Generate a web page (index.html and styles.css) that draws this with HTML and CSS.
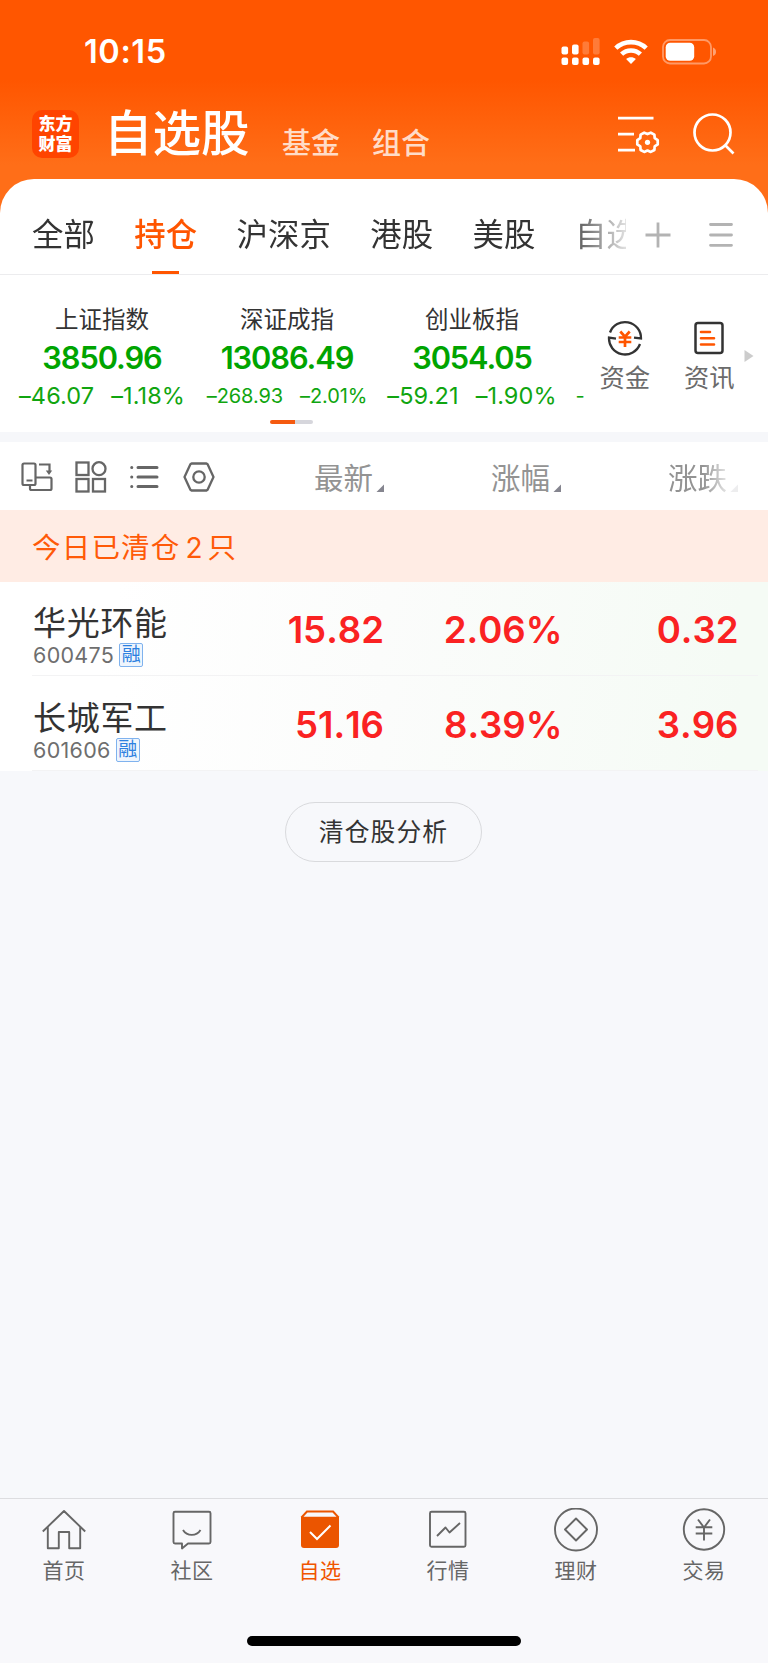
FILE: index.html
```html
<!DOCTYPE html>
<html lang="zh-CN">
<head>
<meta charset="utf-8">
<title>自选股</title>
<link rel="stylesheet" href="styles.css">
</head>
<body>
<div class="app">
  <header class="top">
    <div class="status">
      <span class="clock">10:15</span>
      <svg class="signal" width="40" height="28" viewBox="0 0 40 28" fill="#fff">
        <rect x=".5" y="8.5" width="6.6" height="8" rx="2"/><rect x="11" y="6.5" width="6.6" height="10" rx="2"/>
        <g opacity=".22"><rect x="21.5" y="3.5" width="6.6" height="13" rx="2"/><rect x="32" y="0" width="6.6" height="16.500" rx="2"/></g>
        <rect x=".5" y="19.500" width="6.6" height="7.500" rx="2"/><rect x="11" y="19.500" width="6.6" height="7.500" rx="2"/><rect x="21.500" y="19.500" width="6.6" height="7.500" rx="2"/><rect x="32" y="19.500" width="6.6" height="7.500" rx="2"/>
      </svg>
      <svg class="wifi" width="34" height="26" viewBox="0 0 34 26">
        <g fill="none" stroke="#fff" stroke-width="4.600"><path d="M1.800 9.200a22 22 0 0 1 30.400 0"/><path d="M7.600 15.200a13.600 13.600 0 0 1 18.800 0"/></g>
        <path d="M17 25l-4.900-5c2.900-2.500 6.900-2.500 9.800 0z" fill="#fff"/>
      </svg>
      <svg class="battery" width="55" height="26" viewBox="0 0 55 26">
        <rect x="1" y="1" width="48" height="23.500" rx="7" fill="none" stroke="#fff" stroke-opacity=".4" stroke-width="1.800"/>
        <rect x="3.700" y="3.800" width="28.500" height="18" rx="4.500" fill="#fff"/>
        <path d="M51 8.500q3 1.200 3 4.300t-3 4.300z" fill="#fff" opacity=".45"/>
      </svg>
    </div>
    <div class="nav">
      <div class="logo"><span>东方</span><span>财富</span></div>
      <h1 class="title">自选股</h1>
      <span class="sub">基金</span>
      <span class="sub">组合</span>
      <svg class="tune" width="44" height="42" viewBox="0 0 44 42" fill="none" stroke="#fff" stroke-width="2.700">
        <path d="M1 5.200h35.500M1 21.200h16M1 37.200h17"/>
        <g transform="translate(30.500 29.300)"><path stroke-linejoin="round" d="M10.200-2.100V2.100L7.200 4.100 6.900 7.700 3.300 9.600 0 8.200-3.300 9.600-6.900 7.700-7.200 4.100-10.200 2.100V-2.100L-7.200-4.100-6.900-7.700-3.300-9.600 0-8.200 3.300-9.600 6.900-7.700 7.200-4.100z"/><circle r="2.600" fill="#fff" stroke="none"/></g>
      </svg>
      <svg class="search" width="42" height="42" viewBox="0 0 42 42" fill="none" stroke="#fff" stroke-width="2.700"><circle cx="19.500" cy="19.500" r="18"/><path d="M32 32l8.500 8.500"/></svg>
    </div>
  </header>

  <main class="sheet">
    <nav class="tabs">
      <div class="tablist">
        <span>全部</span><span class="on">持仓</span><span>沪深京</span><span>港股</span><span>美股</span><span>自选</span>
      </div>
      <svg class="plus" width="26" height="26" viewBox="0 0 26 26" stroke="#b3b3b3" stroke-width="2.800"><path d="M13 .5v25M.5 13h25"/></svg>
      <svg class="menu" width="24" height="26" viewBox="0 0 24 26" stroke="#b3b3b3" stroke-width="2.800" stroke-linecap="round"><path d="M1.500 2.500h21M1.500 13h21M1.500 23.300h21"/></svg>
    </nav>

    <section class="market">
      <div class="indices">
        <div class="index"><span class="name">上证指数</span><b class="value">3850.96</b><span class="chg"><i>–46.07</i><i>–1.18%</i></span></div>
        <div class="index"><span class="name">深证成指</span><b class="value">13086.49</b><span class="chg small"><i>–268.93</i><i>–2.01%</i></span></div>
        <div class="index"><span class="name">创业板指</span><b class="value">3054.05</b><span class="chg"><i>–59.21</i><i>–1.90%</i></span></div>
        <div class="peek">-</div>
      </div>
      <div class="shortcut fund">
        <svg width="36" height="36" viewBox="0 0 36 36" fill="none">
          <g stroke="#333" stroke-width="2.300"><path d="M3 12.500A16 16 0 0 1 34 18.500L27 17.600"/><path d="M33 24A16 16 0 0 1 2 17.600L9 18.700"/></g>
          <path d="M13.300 11.500l4.700 5.200 4.700-5.200M11.700 17.500h12.600M11.700 22h12.600M18 17v10" stroke="#ff5500" stroke-width="2.700"/>
        </svg>
        <span>资金</span>
      </div>
      <div class="shortcut">
        <svg width="36" height="36" viewBox="0 0 36 36" fill="none"><rect x="4.500" y="3" width="27" height="30" rx="2.500" stroke="#333" stroke-width="2.500"/><path d="M10 12h9M10 18.200h13M10 24.500h13" stroke="#ff5500" stroke-width="2.600" stroke-linecap="round"/></svg>
        <span>资讯</span>
      </div>
      <svg class="more" width="10" height="14" viewBox="0 0 10 14"><path d="M.5 1v12L9.500 7z" fill="#ccc"/></svg>
      <div class="slider"></div>
    </section>

    <div class="colhead">
      <svg class="ic" width="32" height="32" viewBox="0 0 32 32" fill="none" stroke="#666" stroke-width="2.200"><rect x="1.500" y="2.500" width="13" height="21.500" rx="1.500"/><path d="M5.500 19.500h6M9 24v3.500q0 1.500 1.500 1.500h18.500q1.500 0 1.500-1.500V18q0-1.500-1.500-1.500H15M18 3.500h10.500v7"/><path d="M24.800 9.500h6.400L28 14z" fill="#666" stroke="none"/></svg>
      <svg class="ic" width="32" height="32" viewBox="0 0 32 32" fill="none" stroke="#666" stroke-width="2.300"><rect x="1.500" y="1.500" width="12" height="12.500"/><circle cx="24" cy="7.700" r="6.500"/><rect x="1.500" y="18" width="12" height="12.500"/><rect x="18" y="18" width="12" height="12.500"/></svg>
      <svg class="ic" width="32" height="32" viewBox="0 0 32 32" fill="none" stroke="#666" stroke-width="3" stroke-linecap="round"><path d="M9 6.500h19M9 16h19M9 25.500h19M2.700 6.500h.1M2.700 16h.1M2.700 25.500h.1"/></svg>
      <svg class="ic" width="32" height="32" viewBox="0 0 32 32" fill="none" stroke="#666" stroke-width="2.300" stroke-linejoin="round"><path d="M8.600 2.500h14.800l1.200.8L30.500 16l-5.900 12.700-1.200.8H8.600l-1.200-.8L1.500 16 7.400 3.300z"/><circle cx="16" cy="16" r="5.700"/></svg>
      <span class="col c1">最新<svg width="8" height="8" viewBox="0 0 8 8"><path d="M8 .5V8H.5z" fill="#85858f"/></svg></span>
      <span class="col c2">涨幅<svg width="8" height="8" viewBox="0 0 8 8"><path d="M8 .5V8H.5z" fill="#85858f"/></svg></span>
      <span class="col c3">涨跌<svg width="8" height="8" viewBox="0 0 8 8"><path d="M8 .5V8H.5z" fill="#85858f"/></svg></span>
    </div>

    <div class="banner">今日已清仓<span>2</span>只</div>

    <div class="stock">
      <div class="who"><span class="sname">华光环能</span><span class="code">600475<em>融</em></span></div>
      <b class="v1">15.82</b><b class="v2">2.06%</b><b class="v3">0.32</b>
    </div>
    <div class="stock">
      <div class="who"><span class="sname">长城军工</span><span class="code">601606<em>融</em></span></div>
      <b class="v1">51.16</b><b class="v2">8.39%</b><b class="v3">3.96</b>
    </div>
    <div class="rest"><button class="analyse">清仓股分析</button></div>
  </main>

  <footer class="bar">
    <div class="items">
      <div class="item"><svg width="44" height="44" viewBox="0 0 44 44" fill="none" stroke="#666" stroke-width="1.900"><path d="M.8 23.500L22 3l21.200 20.500M5.800 19v21.200h11V24h10.400v16.200h11V19" stroke-linejoin="round"/></svg><span>首页</span></div>
      <div class="item"><svg width="44" height="44" viewBox="0 0 44 44" fill="none" stroke="#666" stroke-width="1.900" stroke-linejoin="round"><path d="M5 3.800h34q1.500 0 1.500 1.500V34q0 1.500-1.500 1.500H18l-6 5v-5H5q-1.500 0-1.500-1.500V5.300Q3.500 3.800 5 3.800z"/><path d="M13 22c4 6.500 13.500 6.500 17.500 0"/></svg><span>社区</span></div>
      <div class="item on"><svg width="44" height="44" viewBox="0 0 44 44"><path d="M8.500 2.600h27L41 8.500V37q0 3-3 3H6q-3 0-3-3V8.500z" fill="#eb5500"/><path d="M9.500 4.500h25l4 4.300h-33z" fill="#f8f8fb"/><path d="M12 24l7 7L32.500 17.500" fill="none" stroke="#fff" stroke-width="2"/></svg><span>自选</span></div>
      <div class="item"><svg width="44" height="44" viewBox="0 0 44 44" fill="none" stroke="#666" stroke-width="1.900" stroke-linejoin="round"><rect x="4" y="3.800" width="35.500" height="35" rx="1.500"/><path d="M11 28l8.500-8.500 4 5L34 15"/></svg><span>行情</span></div>
      <div class="item"><svg width="44" height="44" viewBox="0 0 44 44" fill="none" stroke="#666" stroke-width="1.900" stroke-linejoin="round"><circle cx="22" cy="21.500" r="21"/><path d="M22 10.500l11 11-11 11-11-11z"/></svg><span>理财</span></div>
      <div class="item"><svg width="44" height="44" viewBox="0 0 44 44" fill="none" stroke="#666" stroke-width="1.900"><circle cx="22" cy="21.500" r="20.200"/><path d="M16 11.500l6 8 6-8M13.700 19.300h16.600M13.700 25.500h16.600M22 19.500V32.500"/></svg><span>交易</span></div>
    </div>
    <div class="home"></div>
  </footer>
</div>
</body>
</html>
```

FILE: styles.css
```css
* { box-sizing: border-box; }
body {
  margin: 0;
  font-family: Inter, "Noto Sans CJK SC", sans-serif;
  color: #333;
  background: #f7f8fb;
}
svg { display: block; flex: none; }
i, em { font-style: normal; }
span, b, i, h1 { white-space: nowrap; }

.app { width: 768px; height: 1663px; display: flex; flex-direction: column; overflow: hidden; background: linear-gradient(#ff5600 80px, #ff6e18 165px); }

/* Status bar and page header */
.top { height: 179px; flex: none; color: #fff; }
.status { height: 103px; display: flex; align-items: center; padding-left: 84px; }
.clock { font-size: 32.500px; font-weight: 600; line-height: 40px; width: 477px; letter-spacing: .600px; }
.wifi { margin-left: 13px; }
.battery { margin-left: 14px; }
.nav { display: flex; align-items: flex-start; padding-left: 32px; }
.logo { width: 47px; height: 48px; flex: none; margin-top: 7px; border-radius: 10px; background: #ff4400; display: flex; flex-direction: column; align-items: center; padding-top: 4px; font-weight: 900; font-size: 17px; line-height: 20px; }
.title { margin: 1px 0 0 25px; width: 178px; flex: none; font-size: 48.500px; font-weight: 500; line-height: 60px; }
.sub { margin-top: 21px; width: 90px; flex: none; font-size: 29px; font-weight: 500; line-height: 40px; color: #ffdcc8; }
.tune { margin: 10px 0 0 155px; }
.search { margin: 10px 0 0 32px; }

/* Sheet */
.sheet { flex: 1; min-height: 0; border-radius: 34px 34px 0 0; background: #fff; display: flex; flex-direction: column; overflow: hidden; }
.tabs { height: 96px; flex: none; display: flex; align-items: center; padding: 0 0 0 32px; border-bottom: 1px solid #ececee; }
.tablist { width: 594px; height: 95px; display: flex; gap: 39.500px; overflow: hidden; font-size: 31.400px; line-height: 113px; -webkit-mask-image: linear-gradient(90deg, #000 530px, rgba(0,0,0,.15) 594px); mask-image: linear-gradient(90deg, #000 530px, rgba(0,0,0,.15) 594px); }
.tablist .on { color: #ff5500; font-weight: 500; background: linear-gradient(#ff5500, #ff5500) 18px 92px / 27px 4px no-repeat; }
.plus { margin: 17px 0 0 18.500px; }
.menu { margin: 17px 0 0 38px; }

.market { height: 157px; flex: none; display: flex; position: relative; padding-left: 9.500px; }
.indices { width: 574px; flex: none; display: flex; overflow: hidden; }
.index { width: 185px; flex: none; display: flex; flex-direction: column; align-items: center; padding-top: 30px; }
.name { font-size: 23.500px; line-height: 30px; }
.value { font-size: 30.800px; font-weight: 600; line-height: 38px; margin-top: 4px; color: #00a400; letter-spacing: -1.100px; }
.chg { display: flex; gap: 17px; font-size: 23.500px; line-height: 30px; margin-top: 4px; color: #10a510; letter-spacing: .100px; }
.chg.small { font-size: 20px; letter-spacing: -.100px; }
.peek { padding: 106px 0 0 11px; font-size: 20px; line-height: 30px; color: #10a510; }
.shortcut { width: 84.500px; flex: none; display: flex; flex-direction: column; align-items: center; padding-top: 45px; font-size: 25.300px; line-height: 30px; color: #6b6b6b; }
.fund { margin-left: -1px; }
.shortcut span { margin-top: 7px; }
.more { margin: 74px 0 0 -8px; }
.slider { position: absolute; left: 270px; top: 145px; width: 43px; height: 4px; border-radius: 2px; background: linear-gradient(90deg, #f55a10 25px, #d6d6dc 25px); }

.colhead { height: 78px; flex: none; border-top: 10px solid #f6f7fa; display: flex; align-items: center; padding-left: 21px; }
.ic { margin: 1px 22px 0 0; }
.col { display: flex; align-items: flex-end; gap: 3px; margin-top: 3px; font-size: 29.500px; line-height: 38px; color: #939393; }
.col svg { margin-bottom: 5px; }
.c1 { margin-left: 77px; }
.c2 { margin-left: 107px; }
.c3 { margin-left: 107px; -webkit-mask-image: linear-gradient(90deg, #000 35px, rgba(0,0,0,.15) 62px); mask-image: linear-gradient(90deg, #000 35px, rgba(0,0,0,.15) 62px); }

.banner { height: 72px; flex: none; background: #ffece4; color: #ff5a08; padding-left: 32px; font-size: 28.500px; letter-spacing: 1.200px; line-height: 75px; }
.banner span { margin: 0 5px 0 5px; font-size: 28px; letter-spacing: 0; }

.stock { height: 94.500px; flex: none; display: flex; align-items: flex-start; padding: 0 0 0 32px; background: linear-gradient(#f3f3f4, #f3f3f4) 32px 93px / 726px 1px no-repeat, linear-gradient(100deg, #fff 15%, #fbfcfb 50%, #f5fbf5 95%); }
.who { width: 170px; flex: none; display: flex; flex-direction: column; padding-top: 21px; }
.sname { font-size: 33px; letter-spacing: .700px; line-height: 40px; padding-left: 1px; }
.code { display: flex; align-items: center; font-size: 21.500px; line-height: 24px; letter-spacing: .300px; color: #6e6e6e; padding-left: 1px; }
.code em { width: 24px; height: 24px; margin-left: 5px; border: 1.500px solid #7fb2ee; border-radius: 2px; background: #eef5fd; color: #2c80e0; font-size: 19px; line-height: 21px; letter-spacing: 0; display: flex; justify-content: center; }
.stock b { flex: none; padding-top: 25px; font-size: 36.600px; font-weight: 600; line-height: 46px; color: #fa2222; text-align: right; font-kerning: none; }
.v1 { width: 182px; }
.v2 { width: 178.500px; }
.v3 { width: 176px; }

.rest { flex: 1; background: #f7f8fb; display: flex; justify-content: center; align-items: flex-start; padding: 31px 1px 0 0; }
.analyse { width: 197px; height: 60px; border: 1.500px solid #d9dadd; border-radius: 30px; background: none; padding: 0; color: #333; font: 24.800px/57px Inter, "Noto Sans CJK SC", sans-serif; letter-spacing: 1.100px; }

/* Bottom tab bar */
.bar { height: 165px; flex: none; background: #f8f8fb; border-top: 1px solid #dddde0; }
.items { display: flex; height: 137px; }
.item { width: 128px; display: flex; flex-direction: column; align-items: center; padding-top: 9px; font-size: 21px; line-height: 30px; letter-spacing: .500px; color: #666; }
.item span { margin-top: 4px; }
.item.on { color: #f05500; }
.home { width: 274px; height: 10px; margin: 0 auto; border-radius: 5px; background: #000; }
```
